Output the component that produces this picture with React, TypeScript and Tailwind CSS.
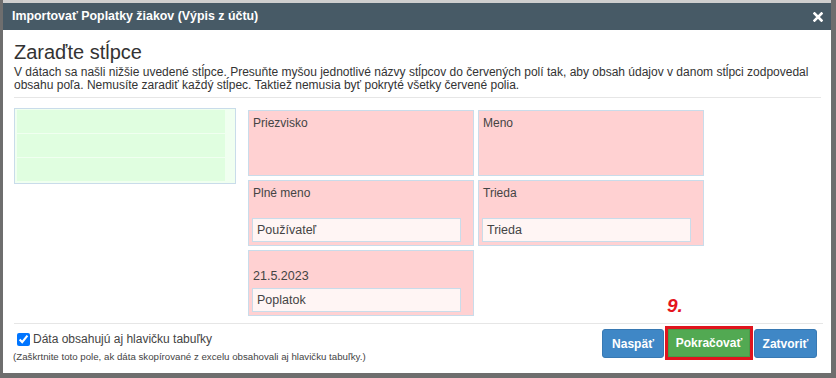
import React from "react";

const font = { fontFamily: '"Liberation Sans", Arial, sans-serif' };

function RedCell({ label, value }: { label?: string; value?: string }) {
  return (
    <div className="h-[66px] bg-[#ffd1d2] border border-[#c9dcea] flex flex-col justify-between">
      <div className="px-[4px] pt-[5px] text-[12px] leading-[14px] text-[#444]">{label}</div>
      {value ? (
        <div className="ml-[3px] mb-[3px] w-[209px] h-[24px] bg-[#fff5f4] border border-[#c9dcea] px-[4px] flex items-center text-[12.5px] text-[#444]">
          {value}
        </div>
      ) : (
        <div />
      )}
    </div>
  );
}

export default function App() {
  return (
    <div style={font} className="w-[836px] h-[378px] bg-[#6e6e6e] overflow-hidden relative">
      <div className="h-[3px] bg-[#cfcfcf] ml-[3px] mr-[5px]" />
      <div className="ml-[3px] w-[828px] h-[370px] bg-white flex flex-col relative">
        {/* header */}
        <div className="h-[27px] bg-[#475a66] flex items-center justify-between pl-[9px] pr-[8px]">
          <span className="text-white font-bold text-[12.4px]">Importovať Poplatky žiakov (Výpis z účtu)</span>
          <svg width="10" height="10" viewBox="0 0 10 10">
            <path d="M1.5 1.5 L8.5 8.5 M8.5 1.5 L1.5 8.5" stroke="white" strokeWidth="2.6" strokeLinecap="square" />
          </svg>
        </div>
        {/* body */}
        <div className="px-[11px] pt-[10px]">
          <div className="text-[20px] leading-[24px] text-[#333]">Zaraďte stĺpce</div>
          <div className="text-[12px] leading-[13px] text-[#333] mt-[2px]">
            V dátach sa našli nižšie uvedené stĺpce. Presuňte myšou jednotlivé názvy stĺpcov do červených polí tak, aby obsah údajov v danom stĺpci zodpovedal
            <br />
            obsahu poľa. Nemusíte zaradiť každý stĺpec. Taktiež nemusia byť pokryté všetky červené polia.
          </div>
          <div className="h-px bg-[#e6e6e6] mt-[5px] mr-[-1px]" />
          <div className="flex items-start gap-[12px] mt-[10px]">
            <div className="w-[222px] h-[76px] border border-[#c9dcea] bg-[#f0fff0] pl-[2px] pt-[1px] pr-[10px] flex flex-col gap-[1px]">
              <div className="h-[23px] bg-[#e0fee0]" />
              <div className="h-[23px] bg-[#e0fee0]" />
              <div className="h-[23px] bg-[#e0fee0]" />
            </div>
            <div className="grid grid-cols-[226px_226px] gap-[4px] mt-[2px]">
              <RedCell label="Priezvisko" />
              <RedCell label="Meno" />
              <RedCell label="Plné meno" value="Používateľ" />
              <RedCell label="Trieda" value="Trieda" />
              <div className="h-[66px] bg-[#ffd1d2] border border-[#c9dcea] flex flex-col justify-end">
                <div className="px-[4px] text-[12.5px] leading-[14px] text-[#444] mb-[5px]">21.5.2023</div>
                <div className="ml-[3px] mb-[3px] w-[209px] h-[24px] bg-[#fff5f4] border border-[#c9dcea] px-[4px] flex items-center text-[12.5px] text-[#444]">
                  Poplatok
                </div>
              </div>
            </div>
          </div>
          <div className="h-px bg-[#e6e6e6] mt-[7px] mr-[-3px]" />
          <div className="flex justify-between items-start">
            <div className="pt-[8px]">
              <label className="flex items-center gap-[3px] pl-[3px] text-[12px] leading-[14px] text-[#444]">
                <input type="checkbox" defaultChecked className="w-[13px] h-[13px] m-0" />
                <span>Dáta obsahujú aj hlavičku tabuľky</span>
              </label>
              <div className="text-[9.7px] leading-[12px] text-[#444] mt-[5px] -ml-[1px]">
                (Zaškrtnite toto pole, ak dáta skopírované z excelu obsahovali aj hlavičku tabuľky.)
              </div>
            </div>
            <div className="flex items-center pt-[2px] pr-[3px] relative">
              <span className="absolute left-[65px] -top-[28px] text-[#e4141e] font-bold italic text-[19px] leading-[20px]">9.</span>
              <button className="w-[62px] h-[29px] bg-[#3f87c6] rounded-[3px] border border-[#3879b3] text-white font-bold text-[12px] mt-[1px]">Naspäť</button>
              <div className="ml-[1px] border-[3px] border-[#e0141e] p-0">
                <button className="block w-[82px] h-[28px] bg-[#52a952] border border-[#4a9a4a] text-white font-bold text-[12px]">Pokračovať</button>
              </div>
              <button className="ml-[1px] w-[63px] h-[29px] bg-[#3f87c6] rounded-[3px] border border-[#3879b3] text-white font-bold text-[12px] mt-[1px]">Zatvoriť</button>
            </div>
          </div>
        </div>
      </div>
    </div>
  );
}
